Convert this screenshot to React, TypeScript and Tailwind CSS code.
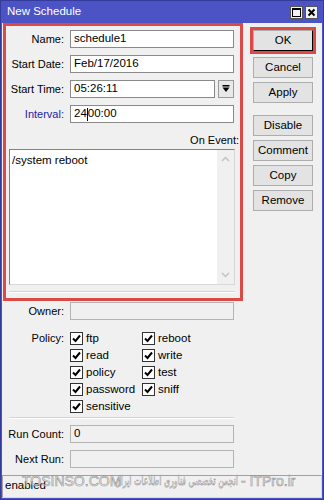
import React from "react";

const font = { fontFamily: '"Liberation Sans", Arial, sans-serif' };

function Check() {
  return (
    <span className="w-[13px] h-[13px] bg-white border border-[#333333] flex items-center justify-center shrink-0">
      <svg width="11" height="11" viewBox="0 0 11 11">
        <path d="M2 5.5 L4.5 8 L9 2.5" stroke="#000" strokeWidth="2" fill="none" />
      </svg>
    </span>
  );
}

function CB({ label }: { label: string }) {
  return (
    <div className="h-[17px] flex items-start gap-[3px]">
      <Check />
      <span className="text-[11.5px] leading-[13px] text-black">{label}</span>
    </div>
  );
}

function Btn({ children, cls = "" }: { children: React.ReactNode; cls?: string }) {
  return (
    <div
      className={
        "w-[60px] h-[21px] bg-[#e3e3e3] border border-[#adadad] flex items-center justify-center text-[11.5px] text-black " +
        cls
      }
    >
      {children}
    </div>
  );
}

function Field({
  label,
  value,
  lw,
  blue = false,
  disabled = false,
  children,
}: {
  label: string;
  value?: string;
  lw: string;
  blue?: boolean;
  disabled?: boolean;
  children?: React.ReactNode;
}) {
  return (
    <div className="flex items-center h-[18px] gap-[6px]">
      <div className={lw + " text-right text-[11px] " + (blue ? "text-[#2424a8]" : "text-black")}>{label}</div>
      {children ? (
        children
      ) : (
        <div
          className={
            "w-[164px] h-[18px] border flex items-center pl-[3px] text-[11.5px] text-black " +
            (disabled ? "bg-[#f0f0f0] border-[#b4b4b4]" : "bg-white border-[#8a8a8a]")
          }
        >
          {value}
        </div>
      )}
    </div>
  );
}

export default function App() {
  return (
    <div className="w-[324px] h-[500px] bg-[#4c53c5] border border-[#353b9a] flex flex-col relative overflow-hidden" style={font}>
      {/* Title bar */}
      <div className="h-[22px] flex items-center pl-[6px] pr-[5px] shrink-0">
        <span className="text-white text-[11.5px] flex-1">New Schedule</span>
        <div className="flex gap-[2px]">
          <div className="w-[13px] h-[13px] bg-[#f2f2f2] border border-[#555] flex items-center justify-center">
            <div className="w-[9px] h-[9px] border border-black border-t-2"></div>
          </div>
          <div className="w-[13px] h-[13px] bg-[#f2f2f2] border border-[#555] flex items-center justify-center">
            <svg width="9" height="9" viewBox="0 0 9 9">
              <path d="M1.5 1.5 L7.5 7.5 M7.5 1.5 L1.5 7.5" stroke="#000" strokeWidth="2" />
            </svg>
          </div>
        </div>
      </div>

      {/* Body */}
      <div className="flex-1 bg-[#f0f0f0] mx-[1px] mb-[1px] flex flex-col">
        <div className="flex">
          {/* Left column */}
          <div className="w-[248px] flex flex-col">
            <div className="ml-[1px] w-[240px] h-[278px] border-[3px] border-[#dc4a48] flex flex-col pt-[4px]">
              <div className="flex flex-col gap-[7px]">
                <Field lw="w-[58px]" label="Name:" value="schedule1" />
                <Field lw="w-[58px]" label="Start Date:" value="Feb/17/2016" />
                <Field lw="w-[58px]" label="Start Time:">
                  <div className="flex gap-[3px]">
                    <div className="w-[145px] h-[18px] bg-white border border-[#8a8a8a] flex items-center pl-[3px] text-[11.5px] text-black">
                      05:26:11
                    </div>
                    <div className="w-[16px] h-[18px] bg-[#e8e8e8] border border-[#9a9a9a] flex items-center justify-center">
                      <svg width="8" height="8" viewBox="0 0 8 8">
                        <rect x="0.5" y="0" width="7" height="1.5" fill="#000" />
                        <path d="M0.5 2.5 H7.5 L4 7 Z" fill="#000" />
                      </svg>
                    </div>
                  </div>
                </Field>
                <Field lw="w-[58px]" label="Interval:" blue>
                  <div className="w-[164px] h-[18px] bg-white border border-[#8a8a8a] flex items-center pl-[3px] text-[11.5px] text-black">
                    24<span className="inline-block w-[1px] h-[13px] bg-black"></span>00:00
                  </div>
                </Field>
              </div>
              <div className="mt-[10px] h-[14px] pr-[1px] text-right text-[11px] text-black leading-[14px]">On Event:</div>
              <div className="mt-[2px] ml-[3px] w-[226px] h-[136px] bg-white border border-[#828282] border-r-[#d8d8d8] border-b-[#d8d8d8] flex">
                <div className="flex-1 pl-[2px] pt-[3px] text-[11.5px] text-black leading-[14px]">/system reboot</div>
                <div className="w-[17px] bg-[#f0f0f0] flex flex-col items-center justify-between py-[6px]">
                  <svg width="9" height="6" viewBox="0 0 9 6">
                    <path d="M1 5 L4.5 1.5 L8 5" stroke="#c2c2c2" strokeWidth="1.5" fill="none" />
                  </svg>
                  <svg width="9" height="6" viewBox="0 0 9 6">
                    <path d="M1 1 L4.5 4.5 L8 1" stroke="#c2c2c2" strokeWidth="1.5" fill="none" />
                  </svg>
                </div>
              </div>
              <div className="mt-[6px] ml-[3px] w-[226px] border-t border-[#d4d4d4] border-b border-b-white"></div>
            </div>

            {/* Owner */}
            <div className="mt-[1px]">
              <Field lw="w-[62px]" label="Owner:" disabled value="" />
            </div>

            {/* Policy */}
            <div className="mt-[12px] flex gap-[6px]">
              <div className="w-[62px] text-right text-[11px] text-black leading-[13px]">Policy:</div>
              <div className="flex">
                <div className="w-[72px] flex flex-col">
                  <CB label="ftp" />
                  <CB label="read" />
                  <CB label="policy" />
                  <CB label="password" />
                  <CB label="sensitive" />
                </div>
                <div className="flex flex-col">
                  <CB label="reboot" />
                  <CB label="write" />
                  <CB label="test" />
                  <CB label="sniff" />
                </div>
              </div>
            </div>

            <div className="ml-[7px] w-[225px] border-t border-[#d4d4d4] border-b border-b-white"></div>

            <div className="mt-[6px] flex flex-col gap-[7px]">
              <Field lw="w-[62px]" label="Run Count:" disabled value="0" />
              <Field lw="w-[62px]" label="Next Run:" disabled value="" />
            </div>
          </div>

          {/* Right column */}
          <div className="flex flex-col pt-[4px]">
            <div className="w-[66px] border-[3px] border-[#dc4a48] p-0">
              <Btn cls="border-[#444] border-r-black border-b-black">OK</Btn>
            </div>
            <div className="ml-[3px] mt-[3px] flex flex-col gap-[4px]">
              <Btn>Cancel</Btn>
              <Btn>Apply</Btn>
              <Btn cls="mt-[8px]">Disable</Btn>
              <Btn>Comment</Btn>
              <Btn>Copy</Btn>
              <Btn>Remove</Btn>
            </div>
          </div>
        </div>

        {/* Status bar */}
        <div className="mt-auto h-[23px] border border-[#a0a0a0] border-b-[#d8d8d8] border-r-[#d8d8d8] flex items-end pl-[2px] pb-[3px] text-[11.5px] text-black">
          enabled
        </div>
      </div>

      {/* Watermark overlay */}
      <div className="absolute left-0 top-[470px] w-[322px] h-[22px] pointer-events-none whitespace-nowrap text-[#ffffff88] [-webkit-text-stroke:0.6px_#959595]">
        <span className="absolute left-[21px] top-0 text-[14px] leading-[20px]">TOSINSO.COM</span>
        <span
          dir="rtl"
          className="absolute right-[85px] top-0 w-[110px] text-[13px] leading-[20px] scale-x-60 origin-right text-right"
          style={{ fontFamily: '"DejaVu Sans", sans-serif' }}
        >
          انجمن تخصصی فناوری اطلاعات ایران
        </span>
        <span className="absolute left-[240px] top-0 text-[14px] leading-[20px]">- ITPro.ir</span>
      </div>
    </div>
  );
}
